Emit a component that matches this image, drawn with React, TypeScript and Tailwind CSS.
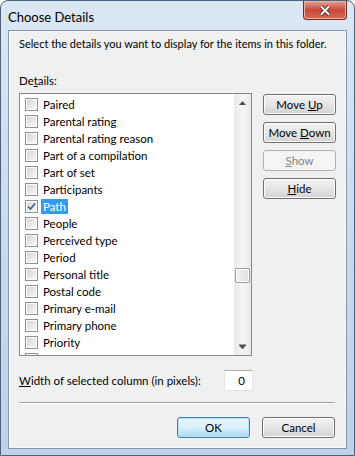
import { ReactNode } from 'react'

// entradas de la lista de detalles
const items = [
  { label: 'Paired', checked: false },
  { label: 'Parental rating', checked: false },
  { label: 'Parental rating reason', checked: false },
  { label: 'Part of a compilation', checked: false },
  { label: 'Part of set', checked: false },
  { label: 'Participants', checked: false },
  { label: 'Path', checked: true, selected: true },
  { label: 'People', checked: false },
  { label: 'Perceived type', checked: false },
  { label: 'Period', checked: false },
  { label: 'Personal title', checked: false },
  { label: 'Postal code', checked: false },
  { label: 'Primary e-mail', checked: false },
  { label: 'Primary phone', checked: false },
  { label: 'Priority', checked: false },
  { label: '', checked: false }, // fila cortada por el borde
]

function CheckBox({ checked }: { checked: boolean }) {
  return (
    <div className="w-[13px] h-[13px] border border-[#8e8f8f] bg-white p-px shrink-0">
      <div className="w-full h-full bg-gradient-to-br from-[#d4d6da] to-[#f7f7f7] flex items-center justify-center">
        {checked && (
          <svg width="9" height="9" viewBox="0 0 9 9">
            <path d="M1 4.5 L3.5 7 L8 1.5" stroke="#4a5f97" strokeWidth="1.7" fill="none" />
          </svg>
        )}
      </div>
    </div>
  )
}

function Button({ children, disabled, primary }: { children: ReactNode; disabled?: boolean; primary?: boolean }) {
  const base = 'w-[73px] h-[21px] rounded-[3px] border flex items-center justify-center leading-none'
  let look = 'border-[#707070] bg-gradient-to-b from-[#f2f2f2] via-[#e6e6e6] to-[#d2d2d2] shadow-[inset_0_0_0_1px_#fcfcfc] text-black'
  if (disabled) look = 'border-[#adb2b5] bg-[#f4f4f4] text-[#838383]'
  if (primary) look = 'border-[#3c7fb1] bg-gradient-to-b from-[#eaf6fd] via-[#d9f0fc] to-[#a7d9f5] shadow-[inset_0_0_0_1px_#b5e3f9] text-black'
  return (
    <div className={`${base} ${look}`}>
      <span className="whitespace-nowrap">{children}</span>
    </div>
  )
}

export default function App() {
  return (
    <div
      className="w-[355px] h-[456px] rounded-t-[8px] border border-[#4f6178] bg-gradient-to-b from-[#dbe7f4] via-[#c9dbee] to-[#bcd2ea] flex flex-col px-[7px] pb-[6px] text-[11.5px] text-black"
      style={{ fontFamily: 'Lato, "Noto Sans", sans-serif' }}
    >
      {/* barra de título */}
      <div className="h-[29px] flex items-start justify-between shrink-0">
        <span className="pt-[7px] text-[13px] text-black">Choose Details</span>
        <div className="w-[44px] h-[19px] rounded-b-[4px] border border-t-0 border-[#6b2a26] bg-gradient-to-b from-[#e3a399] via-[#c7463b] to-[#d56a52] flex items-center justify-center shadow-[inset_0_0_0_1px_#eab4ab]">
          <svg width="12" height="11" viewBox="0 0 12 11">
            <path d="M2 1.5 L10 9.5 M10 1.5 L2 9.5" stroke="#3c1c1a" strokeWidth="3.6" />
            <path d="M2 1.5 L10 9.5 M10 1.5 L2 9.5" stroke="#ffffff" strokeWidth="2" />
          </svg>
        </div>
      </div>

      {/* área de cliente */}
      <div className="flex-1 bg-[#f0f0f0] border border-[#8597ad] shadow-[inset_0_0_0_1px_#ffffff80] flex flex-col px-[10px]">
        <p className="mt-[5px] leading-[15px] whitespace-nowrap text-[11px]">
          Select the details you want to display for the items in this folder.
        </p>
        <p className="mt-[22px] leading-[15px]">
          De<span className="underline">t</span>ails:
        </p>

        <div className="mt-[5px] flex gap-[11px]">
          {/* lista */}
          <div className="w-[234px] h-[263px] border border-[#828790] bg-white flex">
            <div className="flex-1 overflow-hidden pt-[2px] pl-[5px]">
              {items.map((it, i) => (
                <div key={i} className="h-[17px] flex items-center gap-[3px]">
                  <CheckBox checked={it.checked} />
                  {it.label && (
                    <span
                      className={`px-[2px] leading-[15px] whitespace-nowrap ${it.selected ? 'bg-[#3399ff] text-white' : ''}`}
                    >
                      {it.label}
                    </span>
                  )}
                </div>
              ))}
            </div>
            {/* barra de desplazamiento */}
            <div className="w-[17px] bg-gradient-to-r from-[#e8e8e8] via-[#f5f5f5] to-[#e8e8e8] flex flex-col items-center">
              <div className="h-[17px] flex items-center justify-center">
                <svg width="7" height="4" viewBox="0 0 7 4">
                  <path d="M0 4 L3.5 0 L7 4 Z" fill="#4d4d4d" />
                </svg>
              </div>
              <div className="flex-1 w-full flex flex-col items-center">
                <div className="h-[157px]" />
                <div className="w-[15px] h-[15px] rounded-[2px] border border-[#9b9b9b] bg-gradient-to-r from-[#f3f3f3] to-[#dcdcdc] shadow-[inset_0_0_0_1px_#ffffff]" />
              </div>
              <div className="h-[17px] flex items-center justify-center">
                <svg width="7" height="5" viewBox="0 0 7 5">
                  <path d="M0 0 H7 M0 1 L3.5 5 L7 1 Z" fill="#4d4d4d" stroke="#4d4d4d" strokeWidth="0.6" />
                </svg>
              </div>
            </div>
          </div>

          {/* botones */}
          <div className="flex flex-col gap-[7px] pt-[1px]">
            <Button>
              Move <span className="underline">U</span>p
            </Button>
            <Button>
              Move <span className="underline">D</span>own
            </Button>
            <Button disabled>
              <span className="underline">S</span>how
            </Button>
            <Button>
              <span className="underline">H</span>ide
            </Button>
          </div>
        </div>

        <div className="mt-[14px] flex items-center w-[234px] justify-between">
          <span className="whitespace-nowrap">
            <span className="underline">W</span>idth of selected column (in pixels):
          </span>
          <div className="w-[29px] h-[21px] bg-white border border-[#e3e3e3] border-t-[#abadb3] flex items-center justify-end pr-[7px]">
            0
          </div>
        </div>

        <div className="mt-[11px] h-px bg-[#a0a0a0] border-b border-white w-[316px] box-content" />

        <div className="mt-[13px] flex justify-end gap-[12px] pr-[1px]">
          <Button primary>OK</Button>
          <Button>Cancel</Button>
        </div>
      </div>
    </div>
  )
}
